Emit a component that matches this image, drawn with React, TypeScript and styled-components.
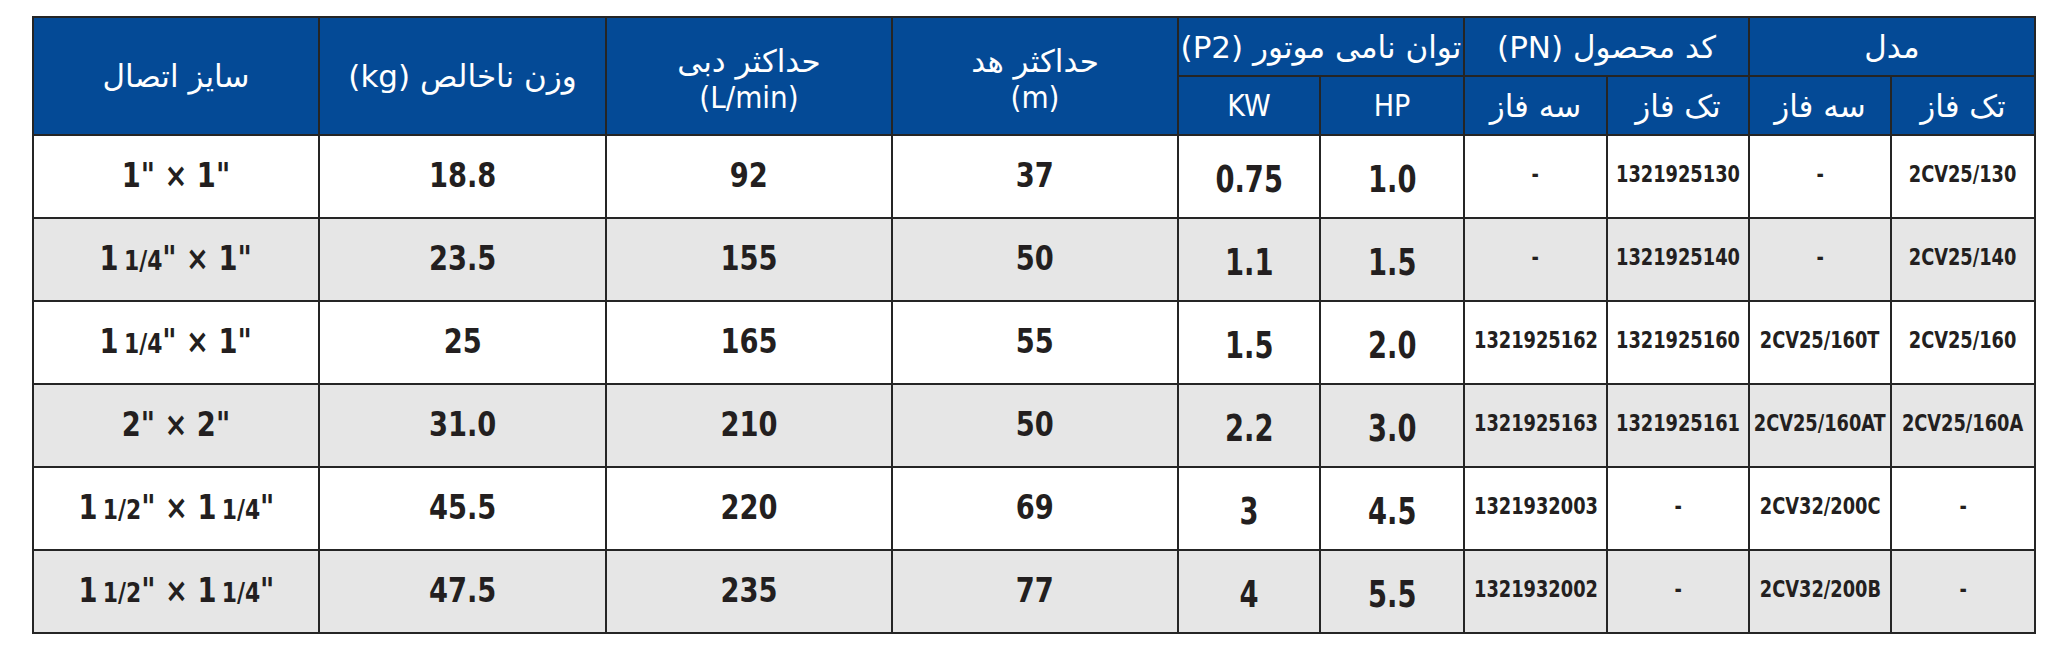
import React from "react";
import styled, { createGlobalStyle } from "styled-components";

const GlobalStyle = createGlobalStyle`
  html, body { margin: 0; padding: 0; background: #ffffff; }
  body { font-family: "DejaVu Sans", "Noto Sans", sans-serif; }
`;

const Page = styled.div`
  padding: 16px 0 0 32px;
  width: 2063px;
  height: 655px;
  box-sizing: border-box;
  background: #ffffff;
`;

const Table = styled.table`
  width: 2002px;
  border-collapse: collapse;
  table-layout: fixed;
  direction: rtl;
`;

const HeadCell = styled.th<{ $h: number; $two?: boolean }>`
  height: ${(p) => p.$h}px;
  padding: ${(p) => (p.$two ? "6px 0 0" : "0")};
  background: #044a96;
  color: #ffffff;
  border: 2px solid #252525;
  font-family: "DejaVu Sans", "Noto Sans", sans-serif;
  font-weight: normal;
  font-size: 31px;
  line-height: 36px;
  text-align: center;
  vertical-align: middle;
`;

const Unit = styled.span`
  display: block;
  direction: ltr;
  font-family: "DejaVu Sans Condensed", "DejaVu Sans", sans-serif;
  font-size: 31px;
`;

const LatinHead = styled.span`
  font-family: "DejaVu Sans Condensed", "DejaVu Sans", sans-serif;
  font-size: 30px;
`;

const Row = styled.tr<{ $alt: boolean }>`
  height: 83px;
  background: ${(p) => (p.$alt ? "#e6e6e6" : "#ffffff")};
`;

type Kind = "big" | "power" | "code";

const Cell = styled.td<{ $kind: Kind }>`
  padding: ${(p) => (p.$kind === "power" ? "6px 0 0" : p.$kind === "code" ? "0 0 3px" : "0 0 2px")};
  border: 2px solid #252525;
  vertical-align: middle;
  overflow: visible;
`;

const CellBody = styled.div`
  display: flex;
  justify-content: center;
  align-items: center;
  direction: ltr;
`;

const sizes: Record<Kind, { fs: number; sx: number }> = {
  big: { fs: 33, sx: 0.92 },
  power: { fs: 38, sx: 0.8 },
  code: { fs: 23, sx: 0.86 },
};

const Value = styled.span<{ $kind: Kind }>`
  display: inline-block;
  flex: none;
  white-space: nowrap;
  color: #231f20;
  font-family: "DejaVu Sans Condensed", "DejaVu Sans", sans-serif;
  font-weight: 700;
  font-size: ${(p) => sizes[p.$kind].fs}px;
  line-height: 1.2;
  transform: scaleX(${(p) => sizes[p.$kind].sx});
  transform-origin: center;
`;

const Frac = styled.span`
  font-size: 0.8em;
  margin-left: 0.22em;
`;

type Size = { a: string; af?: string; b: string; bf?: string };

type DataRow = {
  m1: string;
  m3: string;
  c1: string;
  c3: string;
  hp: string;
  kw: string;
  head: string;
  flow: string;
  weight: string;
  size: Size;
};

const rows: DataRow[] = [
  { m1: "2CV25/130", m3: "-", c1: "1321925130", c3: "-", hp: "1.0", kw: "0.75", head: "37", flow: "92", weight: "18.8", size: { a: "1", b: "1" } },
  { m1: "2CV25/140", m3: "-", c1: "1321925140", c3: "-", hp: "1.5", kw: "1.1", head: "50", flow: "155", weight: "23.5", size: { a: "1", af: "1/4", b: "1" } },
  { m1: "2CV25/160", m3: "2CV25/160T", c1: "1321925160", c3: "1321925162", hp: "2.0", kw: "1.5", head: "55", flow: "165", weight: "25", size: { a: "1", af: "1/4", b: "1" } },
  { m1: "2CV25/160A", m3: "2CV25/160AT", c1: "1321925161", c3: "1321925163", hp: "3.0", kw: "2.2", head: "50", flow: "210", weight: "31.0", size: { a: "2", b: "2" } },
  { m1: "-", m3: "2CV32/200C", c1: "-", c3: "1321932003", hp: "4.5", kw: "3", head: "69", flow: "220", weight: "45.5", size: { a: "1", af: "1/2", b: "1", bf: "1/4" } },
  { m1: "-", m3: "2CV32/200B", c1: "-", c3: "1321932002", hp: "5.5", kw: "4", head: "77", flow: "235", weight: "47.5", size: { a: "1", af: "1/2", b: "1", bf: "1/4" } },
];

const colWidths = [144, 142, 142, 143, 144, 142, 286, 286, 287, 286];

function SizeText({ s }: { s: Size }) {
  return (
    <>
      {s.a}
      {s.af && <Frac>{s.af}</Frac>}
      {'" × '}
      {s.b}
      {s.bf && <Frac>{s.bf}</Frac>}
      {'"'}
    </>
  );
}

function DataCell({ kind, children }: { kind: Kind; children: React.ReactNode }) {
  return (
    <Cell $kind={kind}>
      <CellBody>
        <Value $kind={kind}>{children}</Value>
      </CellBody>
    </Cell>
  );
}

export default function App() {
  return (
    <>
      <GlobalStyle />
      <Page>
        <Table>
          <colgroup>
            {colWidths.map((w, i) => (
              <col key={i} style={{ width: w }} />
            ))}
          </colgroup>
          <thead>
            <tr>
              <HeadCell $h={57} colSpan={2}>مدل</HeadCell>
              <HeadCell $h={57} colSpan={2}>کد محصول (PN)</HeadCell>
              <HeadCell $h={57} colSpan={2}>توان نامی موتور (P2)</HeadCell>
              <HeadCell $h={57} $two rowSpan={2}>
                حداکثر هد
                <Unit>(m)</Unit>
              </HeadCell>
              <HeadCell $h={57} $two rowSpan={2}>
                حداکثر دبی
                <Unit>(L/min)</Unit>
              </HeadCell>
              <HeadCell $h={57} rowSpan={2}>وزن ناخالص (kg)</HeadCell>
              <HeadCell $h={57} rowSpan={2}>سایز اتصال</HeadCell>
            </tr>
            <tr>
              <HeadCell $h={57}>تک فاز</HeadCell>
              <HeadCell $h={57}>سه فاز</HeadCell>
              <HeadCell $h={57}>تک فاز</HeadCell>
              <HeadCell $h={57}>سه فاز</HeadCell>
              <HeadCell $h={57}><LatinHead>HP</LatinHead></HeadCell>
              <HeadCell $h={57}><LatinHead>KW</LatinHead></HeadCell>
            </tr>
          </thead>
          <tbody>
            {rows.map((r, i) => (
              <Row key={i} $alt={i % 2 === 1}>
                <DataCell kind="code">{r.m1}</DataCell>
                <DataCell kind="code">{r.m3}</DataCell>
                <DataCell kind="code">{r.c1}</DataCell>
                <DataCell kind="code">{r.c3}</DataCell>
                <DataCell kind="power">{r.hp}</DataCell>
                <DataCell kind="power">{r.kw}</DataCell>
                <DataCell kind="big">{r.head}</DataCell>
                <DataCell kind="big">{r.flow}</DataCell>
                <DataCell kind="big">{r.weight}</DataCell>
                <DataCell kind="big"><SizeText s={r.size} /></DataCell>
              </Row>
            ))}
          </tbody>
        </Table>
      </Page>
    </>
  );
}
